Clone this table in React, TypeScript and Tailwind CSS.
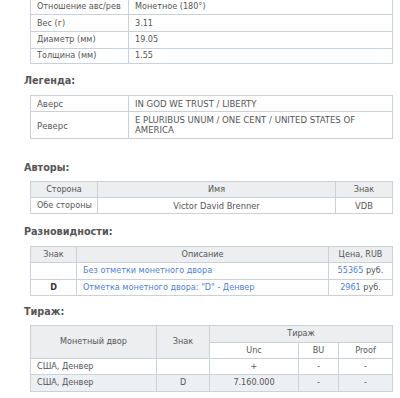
import React from "react"

const td = "border border-[#c9d1d9] px-[6px] py-0 whitespace-nowrap overflow-hidden"
const th = "border border-[#c9d1d9] bg-[#eceef0] font-normal px-[6px] py-0 text-center whitespace-nowrap"
const link = "text-[#4d7fd8]"

function Heading({ children, className }: { children: React.ReactNode; className?: string }) {
  return (
    <div className={"pl-[24px] h-[14px] leading-[14px] text-[10.75px] font-bold text-[#555] " + (className ?? "")}>
      {children}
    </div>
  )
}

export default function App() {
  return (
    <div
      className="w-[400px] h-[398px] overflow-hidden bg-white text-[9px] leading-[11px] text-[#555]"
      style={{ fontFamily: "'DejaVu Sans Condensed', 'DejaVu Sans', Verdana, sans-serif" }}
    >
      {/* Характеристики */}
      <div className="pl-[30px] -mt-[2.5px]">
        <table className="w-[363px] border-collapse table-fixed">
          <colgroup>
            <col className="w-[98px]" />
            <col />
          </colgroup>
          <tbody>
            <tr className="h-[16.7px]"><td className={td}>Отношение авс/рев</td><td className={td}>Монетное (180°)</td></tr>
            <tr className="h-[16.7px]"><td className={td}>Вес (г)</td><td className={td}>3.11</td></tr>
            <tr className="h-[16.7px]"><td className={td}>Диаметр (мм)</td><td className={td}>19.05</td></tr>
            <tr className="h-[15.6px]"><td className={td}>Толщина (мм)</td><td className={td}>1.55</td></tr>
          </tbody>
        </table>
      </div>

      <Heading className="mt-[10px]">Легенда:</Heading>
      <div className="pl-[30px] mt-[7px]">
        <table className="w-[363px] border-collapse table-fixed">
          <colgroup>
            <col className="w-[98px]" />
            <col />
          </colgroup>
          <tbody>
            <tr className="h-[16px]"><td className={td + " text-[9.5px]"}>Аверс</td><td className={td + " text-[9.5px]"}>IN GOD WE TRUST / LIBERTY</td></tr>
            <tr className="h-[27px]">
              <td className={td + " text-[9.5px]"}>Реверс</td>
              <td className="border border-[#c9d1d9] pl-[6px] pr-[20px] py-0 text-[9.5px] leading-[10px]">E PLURIBUS UNUM / ONE CENT / UNITED STATES OF AMERICA</td>
            </tr>
          </tbody>
        </table>
      </div>

      <Heading className="mt-[22px]">Авторы:</Heading>
      <div className="pl-[30px] mt-[6px]">
        <table className="w-[363px] border-collapse table-fixed">
          <colgroup>
            <col className="w-[67px]" />
            <col className="w-[238px]" />
            <col />
          </colgroup>
          <tbody>
            <tr className="h-[16px]"><th className={th}>Сторона</th><th className={th}>Имя</th><th className={th}>Знак</th></tr>
            <tr className="h-[16px]">
              <td className={td + " text-center"}>Обе стороны</td>
              <td className={td + " text-center text-[9.25px]"}>Victor David Brenner</td>
              <td className={td + " text-center text-[9.25px]"}>VDB</td>
            </tr>
          </tbody>
        </table>
      </div>

      <Heading className="mt-[11px]">Разновидности:</Heading>
      <div className="pl-[30px] mt-[7px]">
        <table className="w-[363px] border-collapse table-fixed">
          <colgroup>
            <col className="w-[46px]" />
            <col className="w-[252px]" />
            <col />
          </colgroup>
          <tbody>
            <tr className="h-[15.5px]"><th className={th}>Знак</th><th className={th}>Описание</th><th className={th}>Цена, RUB</th></tr>
            <tr className="h-[17px]">
              <td className={td}></td>
              <td className={td}><span className={link}>Без отметки монетного двора</span></td>
              <td className={td + " text-center"}><span className={link}>55365</span> руб.</td>
            </tr>
            <tr className="h-[16px]">
              <td className={td + " text-center font-bold text-[#333]"}>D</td>
              <td className={td}><span className={link}>Отметка монетного двора: "D" - Денвер</span></td>
              <td className={td + " text-center"}><span className={link}>2961</span> руб.</td>
            </tr>
          </tbody>
        </table>
      </div>

      <Heading className="mt-[9px]">Тираж:</Heading>
      <div className="pl-[30px] mt-[6px]">
        <table className="w-[363px] border-collapse table-fixed">
          <colgroup>
            <col className="w-[126px]" />
            <col className="w-[53px]" />
            <col className="w-[89px]" />
            <col className="w-[40px]" />
            <col />
          </colgroup>
          <tbody>
            <tr className="h-[17px]">
              <th rowSpan={2} className={th}>Монетный двор</th>
              <th rowSpan={2} className={th}>Знак</th>
              <th colSpan={3} className={th}>Тираж</th>
            </tr>
            <tr className="h-[16px]">
              <td className={td + " text-center"}>Unc</td>
              <td className={td + " text-center"}>BU</td>
              <td className={td + " text-center"}>Proof</td>
            </tr>
            <tr className="h-[16px]">
              <td className={td}>США, Денвер</td>
              <td className={td}></td>
              <td className={td + " text-center"}>+</td>
              <td className={td + " text-center"}>-</td>
              <td className={td + " text-center"}>-</td>
            </tr>
            <tr className="h-[17px] bg-[#edf0f3]">
              <td className={td}>США, Денвер</td>
              <td className={td + " text-center"}>D</td>
              <td className={td + " text-center"}>7.160.000</td>
              <td className={td + " text-center"}>-</td>
              <td className={td + " text-center"}>-</td>
            </tr>
          </tbody>
        </table>
      </div>
    </div>
  )
}
